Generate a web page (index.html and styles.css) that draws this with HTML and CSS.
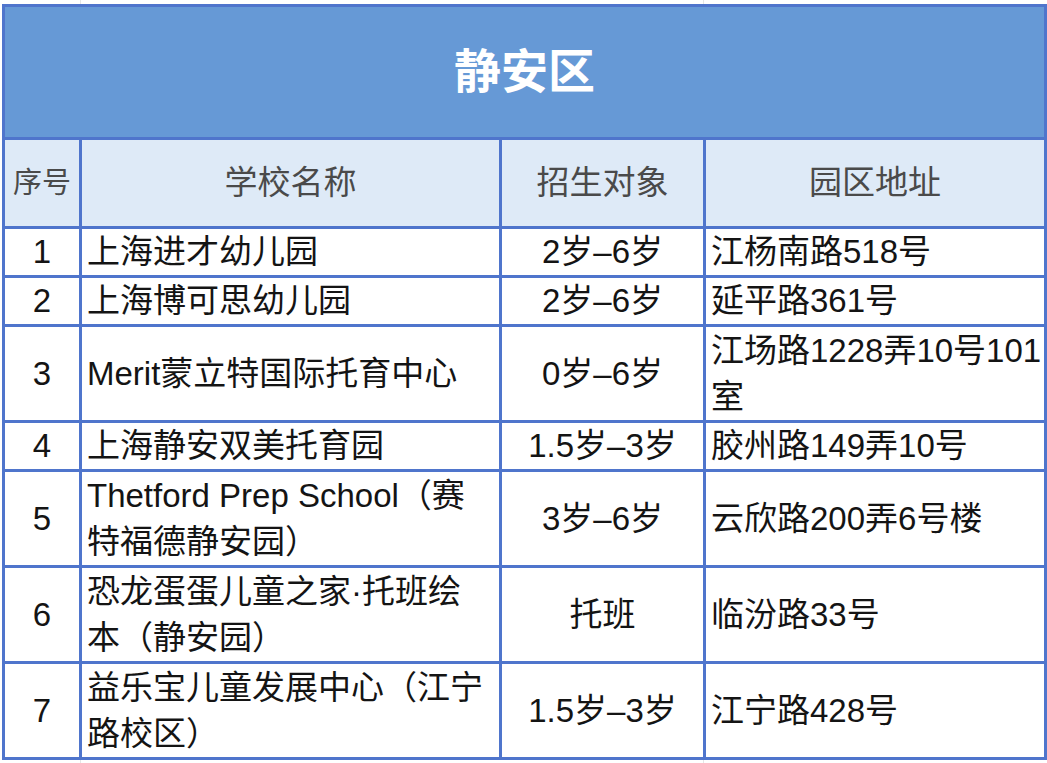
FILE: index.html
```html
<!DOCTYPE html>
<html lang="zh-CN">
<head>
<meta charset="utf-8">
<title>静安区</title>
<link rel="stylesheet" href="styles.css">
</head>
<body>
<div class="sheet">
  <table class="schools">
    <colgroup>
      <col class="c-no">
      <col class="c-name">
      <col class="c-age">
      <col class="c-addr">
    </colgroup>
    <thead>
      <tr class="title-row"><th colspan="4" class="title">静安区</th></tr>
      <tr class="head-row">
        <th class="h-no">序号</th>
        <th>学校名称</th>
        <th>招生对象</th>
        <th>园区地址</th>
      </tr>
    </thead>
    <tbody>
      <tr class="r1"><td class="no">1</td><td class="name">上海进才幼儿园</td><td class="age">2岁–6岁</td><td class="addr">江杨南路518号</td></tr>
      <tr class="r1"><td class="no">2</td><td class="name">上海博可思幼儿园</td><td class="age">2岁–6岁</td><td class="addr">延平路361号</td></tr>
      <tr class="r2"><td class="no">3</td><td class="name">Merit蒙立特国际托育中心</td><td class="age">0岁–6岁</td><td class="addr">江场路1228弄10号101<br>室</td></tr>
      <tr class="r1"><td class="no">4</td><td class="name">上海静安双美托育园</td><td class="age">1.5岁–3岁</td><td class="addr">胶州路149弄10号</td></tr>
      <tr class="r2"><td class="no">5</td><td class="name">Thetford Prep School（赛<br>特福德静安园）</td><td class="age">3岁–6岁</td><td class="addr">云欣路200弄6号楼</td></tr>
      <tr class="r2"><td class="no">6</td><td class="name">恐龙蛋蛋儿童之家·托班绘<br>本（静安园）</td><td class="age">托班</td><td class="addr">临汾路33号</td></tr>
      <tr class="r2"><td class="no">7</td><td class="name">益乐宝儿童发展中心（江宁<br>路校区）</td><td class="age">1.5岁–3岁</td><td class="addr">江宁路428号</td></tr>
    </tbody>
  </table>
</div>
</body>
</html>
```

FILE: styles.css
```css
html, body {
  margin: 0;
  padding: 0;
  background: #ffffff;
}

.sheet {
  padding: 4px 0 0 2px;
  background-image:
    linear-gradient(to right, transparent 80px, #e6e6e6 80px, #e6e6e6 81px, transparent 81px),
    linear-gradient(to right, transparent 703px, #e6e6e6 703px, #e6e6e6 704px, transparent 704px);
  min-height: 763px;
  box-sizing: border-box;
}

.schools {
  border-collapse: collapse;
  table-layout: fixed;
  width: 1042px;
  font-family: "Liberation Sans", "Noto Sans CJK SC", sans-serif;
  font-size: 33px;
  color: #141414;
  background: #ffffff;
}

.c-no { width: 77px; }
.c-name { width: 420px; }
.c-age { width: 204px; }
.c-addr { width: 341px; }

.schools th,
.schools td {
  border: 3px solid #4f75cc;
  padding: 0;
  line-height: 46px;
  white-space: nowrap;
  overflow: hidden;
}

.title-row { height: 133px; }

.title {
  background: #6699d6;
  color: #ffffff;
  font-size: 47px;
  font-weight: bold;
  text-align: center;
}

.head-row { height: 89px; }

.head-row th {
  background: #deeaf7;
  color: #4a4a4a;
  font-weight: normal;
  text-align: center;
}

.head-row .h-no {
  font-size: 29px;
}

.r1 { height: 48px; }
.r2 { height: 96px; }

.no {
  text-align: center;
}

.name {
  text-align: left;
  padding-left: 5px !important;
}

.age {
  text-align: center;
}

.addr {
  text-align: left;
  padding-left: 5px !important;
}
```
